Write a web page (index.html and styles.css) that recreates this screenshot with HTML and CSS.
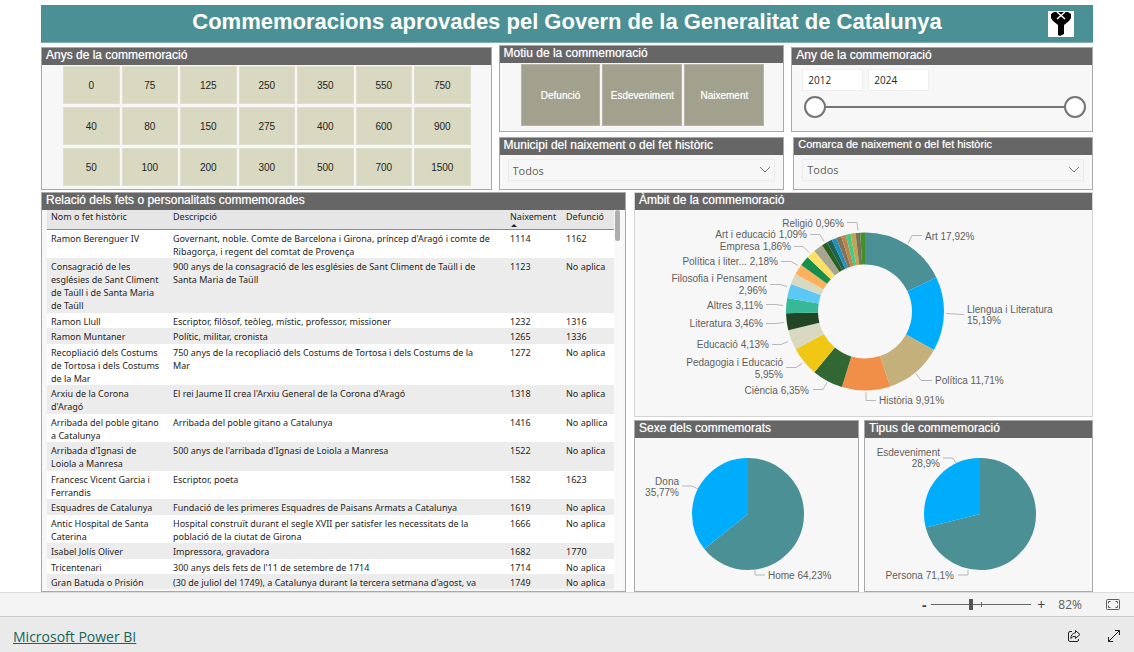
FILE: index.html
```html
<!DOCTYPE html>
<html lang="ca">
<head>
<meta charset="utf-8">
<meta name="viewport" content="width=device-width, initial-scale=1">
<title>Commemoracions aprovades pel Govern de la Generalitat de Catalunya</title>
<link rel="stylesheet" href="styles.css">
</head>
<body>
<main class="report">
  <header class="banner">
    <h1 class="banner-title">Commemoracions aprovades pel Govern de la Generalitat de Catalunya</h1>
    <button class="clear-filter" type="button" aria-label="Esborra els filtres">
      <svg viewBox="0 0 26 26" width="26" height="26" aria-hidden="true">
        <path d="M3 3L6 1H20L23 3V7L21 10L16 14V23L12 25L10 24V14L5 10L3 7Z" fill="#000"/>
        <path d="M9 1L17 8M17 1L9 8" stroke="#fff" stroke-width="1.500" fill="none"/>
      </svg>
    </button>
  </header>

  <div class="filters">
    <section class="panel years">
      <h2 class="panel-title">Anys de la commemoració</h2>
      <div class="year-tiles">
        <button class="tile" type="button">0</button><button class="tile" type="button">75</button><button class="tile" type="button">125</button><button class="tile" type="button">250</button><button class="tile" type="button">350</button><button class="tile" type="button">550</button><button class="tile" type="button">750</button>
        <button class="tile" type="button">40</button><button class="tile" type="button">80</button><button class="tile" type="button">150</button><button class="tile" type="button">275</button><button class="tile" type="button">400</button><button class="tile" type="button">600</button><button class="tile" type="button">900</button>
        <button class="tile" type="button">50</button><button class="tile" type="button">100</button><button class="tile" type="button">200</button><button class="tile" type="button">300</button><button class="tile" type="button">500</button><button class="tile" type="button">700</button><button class="tile" type="button">1500</button>
      </div>
    </section>

    <div class="filter-stack">
      <section class="panel">
        <h2 class="panel-title">Motiu de la commemoració</h2>
        <div class="reason-tiles">
          <button class="tile tile-dark" type="button">Defunció</button>
          <button class="tile tile-dark" type="button">Esdeveniment</button>
          <button class="tile tile-dark" type="button">Naixement</button>
        </div>
      </section>
      <section class="panel">
        <h2 class="panel-title"><label for="municipi">Municipi del naixement o del fet històric</label></h2>
        <div class="dropdown">
          <select class="dropdown-select" id="municipi"><option>Todos</option></select>
          <svg class="dropdown-arrow" viewBox="0 0 12 8" width="12" height="8" aria-hidden="true"><path d="M1 1L6 6L11 1"/></svg>
        </div>
      </section>
    </div>

    <div class="filter-stack filter-stack-right">
      <section class="panel">
        <h2 class="panel-title">Any de la commemoració</h2>
        <div class="range">
          <div class="range-values">
            <input class="range-box" type="text" value="2012" aria-label="Any inicial">
            <input class="range-box" type="text" value="2024" aria-label="Any final">
          </div>
          <div class="range-track">
            <input class="range-input" type="range" min="2012" max="2024" value="2012" aria-label="Des de l'any">
            <input class="range-input" type="range" min="2012" max="2024" value="2024" aria-label="Fins a l'any">
          </div>
        </div>
      </section>
      <section class="panel comarca">
        <h2 class="panel-title panel-title-small"><label for="comarca">Comarca de naixement o del fet històric</label></h2>
        <div class="dropdown">
          <select class="dropdown-select" id="comarca"><option>Todos</option></select>
          <svg class="dropdown-arrow" viewBox="0 0 12 8" width="12" height="8" aria-hidden="true"><path d="M1 1L6 6L11 1"/></svg>
        </div>
      </section>
    </div>
  </div>

  <div class="details">
    <section class="panel list">
      <h2 class="panel-title">Relació dels fets o personalitats commemorades</h2>
      <div class="list-body">
        <div class="list-view">
          <table class="events">
            <colgroup><col class="col-name"><col class="col-text"><col class="col-birth"><col class="col-death"></colgroup>
            <thead>
              <tr><th scope="col">Nom o fet històric</th><th scope="col">Descripció</th><th scope="col" class="sorted" aria-sort="ascending">Naixement</th><th scope="col">Defunció</th></tr>
            </thead>
            <tbody>
              <tr><td>Ramon Berenguer IV</td><td>Governant, noble. Comte de Barcelona i Girona, príncep d'Aragó i comte de Ribagorça, i regent del comtat de Provença</td><td>1114</td><td>1162</td></tr>
              <tr><td>Consagració de les esglésies de Sant Climent de Taüll i de Santa Maria de Taüll</td><td>900 anys de la consagració de les esglésies de Sant Climent de Taüll i de Santa Maria de Taüll</td><td>1123</td><td>No aplica</td></tr>
              <tr><td>Ramon Llull</td><td>Escriptor, filòsof, teòleg, místic, professor, missioner</td><td>1232</td><td>1316</td></tr>
              <tr><td>Ramon Muntaner</td><td>Polític, militar, cronista</td><td>1265</td><td>1336</td></tr>
              <tr><td>Recopliació dels Costums de Tortosa i dels Costums de la Mar</td><td>750 anys de la recopliació dels Costums de Tortosa i dels Costums de la Mar</td><td>1272</td><td>No aplica</td></tr>
              <tr><td>Arxiu de la Corona d'Aragó</td><td>El rei Jaume II crea l'Arxiu General de la Corona d'Aragó</td><td>1318</td><td>No aplica</td></tr>
              <tr><td>Arribada del poble gitano a Catalunya</td><td>Arribada del poble gitano a Catalunya</td><td>1416</td><td>No apllica</td></tr>
              <tr><td>Arribada d'Ignasi de Loiola a Manresa</td><td>500 anys de l'arribada d'Ignasi de Loiola a Manresa</td><td>1522</td><td>No aplica</td></tr>
              <tr><td>Francesc Vicent Garcia i Ferrandis</td><td>Escriptor, poeta</td><td>1582</td><td>1623</td></tr>
              <tr><td>Esquadres de Catalunya</td><td>Fundació de les primeres Esquadres de Paisans Armats a Catalunya</td><td>1619</td><td>No aplica</td></tr>
              <tr><td>Antic Hospital de Santa Caterina</td><td>Hospital construït durant el segle XVII per satisfer les necessitats de la població de la ciutat de Girona</td><td>1666</td><td>No aplica</td></tr>
              <tr><td>Isabel Jolís Oliver</td><td>Impressora, gravadora</td><td>1682</td><td>1770</td></tr>
              <tr><td>Tricentenari</td><td>300 anys dels fets de l'11 de setembre de 1714</td><td>1714</td><td>No aplica</td></tr>
              <tr><td>Gran Batuda o Prisión</td><td>(30 de juliol del 1749), a Catalunya durant la tercera setmana d'agost, va</td><td>1749</td><td>No aplica</td></tr>
            </tbody>
          </table>
        </div>
        <div class="scrollbar"><div class="scrollbar-thumb"></div></div>
      </div>
    </section>

    <div class="charts">
      <section class="panel chart-wide">
        <h2 class="panel-title">Àmbit de la commemoració</h2>
        <div class="chart">
          <svg class="chart-svg" viewBox="-230 -101 457 205" role="img" aria-label="Àmbit de la commemoració">
            <g class="ring" transform="rotate(-90)">
              <circle r="63" pathLength="100" stroke="#4a9094" stroke-dasharray="17.92 82.08"/>
              <circle r="63" pathLength="100" stroke="#00acfc" stroke-dasharray="15.19 84.81" stroke-dashoffset="-17.92"/>
              <circle r="63" pathLength="100" stroke="#c4b07b" stroke-dasharray="11.71 88.29" stroke-dashoffset="-33.11"/>
              <circle r="63" pathLength="100" stroke="#f18f49" stroke-dasharray="9.91 90.09" stroke-dashoffset="-44.82"/>
              <circle r="63" pathLength="100" stroke="#326633" stroke-dasharray="6.35 93.65" stroke-dashoffset="-54.73"/>
              <circle r="63" pathLength="100" stroke="#f1c716" stroke-dasharray="5.95 94.05" stroke-dashoffset="-61.08"/>
              <circle r="63" pathLength="100" stroke="#d9d8c0" stroke-dasharray="4.13 95.87" stroke-dashoffset="-67.03"/>
              <circle r="63" pathLength="100" stroke="#224624" stroke-dasharray="3.46 96.54" stroke-dashoffset="-71.16"/>
              <circle r="63" pathLength="100" stroke="#37b897" stroke-dasharray="3.11 96.89" stroke-dashoffset="-74.62"/>
              <circle r="63" pathLength="100" stroke="#5bc8f5" stroke-dasharray="2.96 97.04" stroke-dashoffset="-77.73"/>
              <circle r="63" pathLength="100" stroke="#d9d8c0" stroke-dasharray="2.18 97.82" stroke-dashoffset="-80.69"/>
              <circle r="63" pathLength="100" stroke="#ffb05c" stroke-dasharray="2.18 97.82" stroke-dashoffset="-82.87"/>
              <circle r="63" pathLength="100" stroke="#168f4b" stroke-dasharray="2 98" stroke-dashoffset="-85.05"/>
              <circle r="63" pathLength="100" stroke="#ffe066" stroke-dasharray="1.86 98.14" stroke-dashoffset="-87.05"/>
              <circle r="63" pathLength="100" stroke="#a5a68f" stroke-dasharray="1.95 98.05" stroke-dashoffset="-88.91"/>
              <circle r="63" pathLength="100" stroke="#2b611f" stroke-dasharray="1.14 98.86" stroke-dashoffset="-90.86"/>
              <circle r="63" pathLength="100" stroke="#1c6353" stroke-dasharray="1.09 98.91" stroke-dashoffset="-92"/>
              <circle r="63" pathLength="100" stroke="#2390c0" stroke-dasharray="1 99" stroke-dashoffset="-93.09"/>
              <circle r="63" pathLength="100" stroke="#857452" stroke-dasharray="1 99" stroke-dashoffset="-94.09"/>
              <circle r="63" pathLength="100" stroke="#c2844d" stroke-dasharray="0.96 99.04" stroke-dashoffset="-95.09"/>
              <circle r="63" pathLength="100" stroke="#49c985" stroke-dasharray="1 99" stroke-dashoffset="-96.05"/>
              <circle r="63" pathLength="100" stroke="#c3a451" stroke-dasharray="1 99" stroke-dashoffset="-97.05"/>
              <circle r="63" pathLength="100" stroke="#77715b" stroke-dasharray="0.96 99.04" stroke-dashoffset="-98.05"/>
              <circle r="63" pathLength="100" stroke="#41902a" stroke-dasharray="0.99 99.01" stroke-dashoffset="-99.01"/>
            </g>
            <g class="leaders">
              <polyline points="-18,-89 -8,-89 -7,-81"/>
              <polyline points="-55,-77 -45,-77 -41,-70"/>
              <polyline points="-71,-65 -62,-65 -56,-59"/>
              <polyline points="-84,-50 -74,-50 -67,-46"/>
              <polyline points="-95,-27 -85,-27 -78,-25"/>
              <polyline points="-99,-7 -89,-7 -82,-6"/>
              <polyline points="-99,12 -89,12 -81,11"/>
              <polyline points="-93,33 -84,33 -77,30"/>
              <polyline points="-79,56 -69,56 -63,52"/>
              <polyline points="-52,78 -42,78 -38,71"/>
              <polyline points="1,81 1,89 11,89"/>
              <polyline points="51,62 56,69 67,69"/>
              <polyline points="81,2 99,3"/>
              <polyline points="43,-68 47,-76 57,-76"/>
            </g>
            <g class="labels labels-left">
              <text x="-21" y="-85">Religió 0,96%</text>
              <text x="-58" y="-74">Art i educació 1,09%</text>
              <text x="-74" y="-62">Empresa 1,86%</text>
              <text x="-87" y="-47">Política i liter... 2,18%</text>
              <text x="-98" y="-30">Filosofia i Pensament</text>
              <text x="-98" y="-18">2,96%</text>
              <text x="-102" y="-3">Altres 3,11%</text>
              <text x="-102" y="15">Literatura 3,46%</text>
              <text x="-96" y="36">Educació 4,13%</text>
              <text x="-82" y="54">Pedagogia i Educació</text>
              <text x="-82" y="66">5,95%</text>
              <text x="-56" y="82">Ciència 6,35%</text>
            </g>
            <g class="labels">
              <text x="60" y="-72">Art 17,92%</text>
              <text x="102" y="1">Llengua i Literatura</text>
              <text x="102" y="12">15,19%</text>
              <text x="70" y="72">Política 11,71%</text>
              <text x="14" y="92">Història 9,91%</text>
            </g>
          </svg>
        </div>
      </section>

      <section class="panel">
        <h2 class="panel-title">Sexe dels commemorats</h2>
        <div class="chart">
          <svg class="chart-svg" viewBox="-113 -75 223 151" role="img" aria-label="Sexe dels commemorats">
            <g class="pie" transform="rotate(-90)">
              <circle r="28" pathLength="100" stroke="#4a9094" stroke-dasharray="64.23 35.77"/>
              <circle r="28" pathLength="100" stroke="#00acfc" stroke-dasharray="35.77 64.23" stroke-dashoffset="-64.23"/>
            </g>
            <g class="leaders">
              <polyline points="-66,-28 -56,-28 -50,-25"/>
              <polyline points="7,56 7,61 17,61"/>
            </g>
            <g class="labels labels-left">
              <text x="-69" y="-29">Dona</text>
              <text x="-69" y="-18">35,77%</text>
            </g>
            <g class="labels"><text x="20" y="65">Home 64,23%</text></g>
          </svg>
        </div>
      </section>

      <section class="panel">
        <h2 class="panel-title">Tipus de commemoració</h2>
        <div class="chart">
          <svg class="chart-svg" viewBox="-115 -75 227 151" role="img" aria-label="Tipus de commemoració">
            <g class="pie" transform="rotate(-90)">
              <circle r="28" pathLength="100" stroke="#4a9094" stroke-dasharray="71.1 28.9"/>
              <circle r="28" pathLength="100" stroke="#00acfc" stroke-dasharray="28.9 71.1" stroke-dashoffset="-71.1"/>
            </g>
            <g class="leaders">
              <polyline points="-37,-56 -27,-56 -24,-51"/>
              <polyline points="-22,61 -12,61 -12,56"/>
            </g>
            <g class="labels labels-left">
              <text x="-40" y="-58">Esdeveniment</text>
              <text x="-40" y="-47">28,9%</text>
              <text x="-26" y="65">Persona 71,1%</text>
            </g>
          </svg>
        </div>
      </section>
    </div>
  </div>
</main>

<div class="zoombar">
  <button class="zoom-step" type="button" aria-label="Redueix">-</button>
  <input class="zoom-range" type="range" min="0" max="100" value="39" aria-label="Zoom">
  <button class="zoom-step" type="button" aria-label="Amplia">+</button>
  <span class="zoom-value">82%</span>
  <button class="icon-button" type="button" aria-label="Ajusta a la pàgina">
    <svg viewBox="0 0 14 11" width="14" height="11" aria-hidden="true">
      <rect x="0.5" y="0.5" width="13" height="10" rx="1"/>
      <path d="M2.5 4.5V2.5H4.5M9.5 2.5H11.5V4.5M11.5 6.5V8.5H9.5M4.5 8.5H2.5V6.5"/>
    </svg>
  </button>
</div>

<footer class="statusbar">
  <a class="brand" href="#">Microsoft Power BI</a>
  <div class="actions">
    <button class="icon-button icon-dark" type="button" aria-label="Comparteix">
      <svg viewBox="0 0 14 14" width="14" height="14" aria-hidden="true">
        <path d="M5 2.5H3Q1.500 2.500 1.500 4V11Q1.500 12.500 3 12.500H10Q11.500 12.500 11.500 11V10"/>
        <path d="M8.500 1.500L13 5.500L8.500 9.500V7.300Q5.500 7 3.800 9.500Q4 4.500 8.500 3.800Z"/>
      </svg>
    </button>
    <button class="icon-button icon-dark" type="button" aria-label="Pantalla completa">
      <svg viewBox="0 0 14 14" width="14" height="14" aria-hidden="true">
        <path d="M1.500 12.500L12.500 1.500M8 1.500H12.500V6M1.500 8V12.500H6"/>
      </svg>
    </button>
  </div>
</footer>
</body>
</html>
```
FILE: styles.css
```css
* { box-sizing: border-box; }

body {
  margin: 0;
  height: 100vh;
  display: flex;
  flex-direction: column;
  background: #fff;
  color: #252423;
  font-family: "Liberation Sans", Arial, sans-serif;
  font-size: 10px;
}

button, input, select { font: inherit; color: inherit; margin: 0; }
button { border: 0; padding: 0; background: none; cursor: pointer; }

.report {
  flex: 1;
  min-height: 0;
  display: flex;
  flex-direction: column;
  padding: 5px 41px 0;
}

.banner {
  display: grid;
  grid-template-columns: 1fr auto 1fr;
  align-items: center;
  padding: 6px 19px 5px;
  background: #4a9094;
  border-bottom: 1px solid #7fb0b3;
}
.banner-title {
  grid-column: 2;
  margin: 0;
  color: #fff;
  font-size: 22px;
  line-height: 22px;
  padding-bottom: 4px;
}
.clear-filter {
  justify-self: end;
  display: flex;
  background: #fff;
}

.panel {
  display: flex;
  flex-direction: column;
  min-width: 0;
  min-height: 0;
  background: #f7f7f7;
  border: 1px solid #a9a9a9;
}
.panel-title {
  margin: 0;
  padding: 0 4px;
  height: 17px;
  flex: none;
  background: #666;
  color: #fff;
  font-size: 12px;
  font-weight: 400;
  line-height: 15px;
  text-shadow: 0 0 1px rgba(255, 255, 255, 0.6);
}
.panel-title-small { font-size: 11px; line-height: 13px; }

.filters {
  display: grid;
  grid-template-columns: 451fr 286fr 302fr;
  column-gap: 7px;
  padding-top: 2px;
}
.years { margin-top: 2px; }
.filter-stack {
  display: grid;
  grid-template-rows: auto auto;
  gap: 5px;
}
.filter-stack-right { padding-top: 2px; }
.comarca { margin-left: 2px; }

.year-tiles {
  display: grid;
  grid-template-columns: repeat(7, 1fr);
  gap: 3px 2px;
  padding: 1px 20px 3px 21px;
}
.reason-tiles {
  display: grid;
  grid-template-columns: repeat(3, 1fr);
  gap: 2px;
  padding: 1px 19px 5px 21px;
}
.tile {
  height: 38px;
  background: #d9d8c0;
  border: 1px solid #dfdfcf;
}
.tile-dark {
  height: 62px;
  background: #a2a18e;
  border-color: #b5b4a6;
  color: #fff;
  text-shadow: 0 0 1px rgba(255, 255, 255, 0.6);
}

.dropdown {
  display: grid;
  align-items: center;
  margin: 4px 8px 8px;
  border: 1px solid #ececec;
  font-family: "Open Sans", "Noto Sans", sans-serif;
  font-size: 11px;
}
.dropdown-select {
  grid-area: 1 / 1;
  width: 100%;
  height: 20px;
  padding: 0 4px;
  border: 0;
  background: transparent;
  color: #605e5c;
  appearance: none;
}
.dropdown-arrow {
  grid-area: 1 / 1;
  justify-self: end;
  margin-right: 3px;
  pointer-events: none;
  fill: none;
  stroke: #777;
}

.range { padding: 4px 6px 12px 10px; }
.range-values { display: flex; gap: 5px; }
.range-box {
  width: 61px;
  height: 22px;
  padding: 0 5px;
  border: 1px solid #eee;
  background: #fff;
  font-family: "Open Sans", "Noto Sans", sans-serif;
}
.range-track {
  display: grid;
  align-items: center;
  height: 22px;
  margin: 5px 0 0 2px;
  background: linear-gradient(#757575, #757575) center / calc(100% - 22px) 2px no-repeat;
}
.range-input {
  grid-area: 1 / 1;
  width: 100%;
  height: 22px;
  appearance: none;
  background: none;
  pointer-events: none;
}
.range-input::-webkit-slider-thumb {
  appearance: none;
  width: 22px;
  height: 22px;
  border: 2px solid #757575;
  border-radius: 50%;
  background: #fff;
  pointer-events: auto;
}

.details {
  flex: 1;
  min-height: 0;
  display: grid;
  grid-template-columns: 585fr 459fr;
  grid-template-rows: minmax(0, 1fr);
  column-gap: 8px;
  padding-top: 2px;
}
.list-body {
  flex: 1;
  min-height: 0;
  display: flex;
  padding: 0 3px 2px 5px;
}
.list-view { flex: 1; min-width: 0; overflow: hidden; }
.events {
  width: 100%;
  table-layout: fixed;
  border-collapse: collapse;
  font-family: "Noto Sans", "Open Sans", sans-serif;
  font-size: 9px;
  line-height: 13px;
}
.col-name { width: 122px; }
.col-birth { width: 56px; }
.col-death { width: 52px; }
.events th, .events td {
  padding: 2px 0 0 4px;
  text-align: left;
  vertical-align: top;
  font-weight: 400;
}
.events th {
  padding-top: 0;
  padding-bottom: 7px;
  background: #e6e6e6;
  box-shadow: inset 0 -1px #8a8a8a;
}
.sorted { position: relative; }
.sorted::after {
  content: "";
  position: absolute;
  left: 5px;
  bottom: 3px;
  border: 3px solid transparent;
  border-top: 0;
  border-bottom-color: #252423;
}
.events td { background: #fff; }
.events td:nth-child(1) { padding-right: 7px; }
.events td:nth-child(2) { padding-right: 15px; }
.events tbody tr:nth-child(even) td { background: #ececec; padding-bottom: 1px; }
.scrollbar { width: 8px; flex: none; background: #f9f9f9; padding: 0 2px 0 1px; }
.scrollbar-thumb { height: 31px; border-radius: 3px; background: #adadad; }

.charts {
  display: grid;
  grid-template-columns: 225fr 229fr;
  grid-template-rows: minmax(0, 225fr) minmax(0, 172fr);
  gap: 3px 5px;
}
.chart-wide { grid-column: 1 / -1; border-color: #d4d4d4; }
.chart { flex: 1; min-height: 0; display: flex; }
.chart-svg { width: 100%; height: 100%; }
.ring { fill: none; stroke-width: 32px; }
.pie { fill: none; stroke-width: 56px; }
.leaders { fill: none; stroke: #b8b8b8; }
.labels { fill: #605e5c; font-size: 10px; }
.labels-left { text-anchor: end; }

.zoombar {
  flex: none;
  display: flex;
  align-items: center;
  justify-content: flex-end;
  height: 24px;
  padding-right: 14px;
  border-top: 1px solid #dcdcdc;
  background: #f4f4f4;
  color: #605e5c;
  font-family: "Open Sans", "Noto Sans", sans-serif;
}
.zoom-step {
  width: 20px;
  font-size: 14px;
  line-height: 20px;
  color: #444;
}
.zoom-step:first-child { width: 14px; font-weight: 700; }
.zoom-range {
  width: 100px;
  height: 12px;
  appearance: none;
  background:
    linear-gradient(#666, #666) center / 100% 1px no-repeat,
    linear-gradient(#666, #666) 50px center / 1px 5px no-repeat;
}
.zoom-range::-webkit-slider-thumb {
  appearance: none;
  width: 4px;
  height: 11px;
  background: #555;
}
.zoom-value { margin: 0 24px 0 7px; font-size: 12px; }
.icon-button { display: flex; }
.icon-button svg { fill: none; stroke: #605e5c; }
.icon-dark svg { stroke: #222; }

.statusbar {
  flex: none;
  display: flex;
  align-items: center;
  justify-content: space-between;
  height: 36px;
  padding: 3px 13px 0;
  border-top: 1px solid #c8c8c8;
  background: #eaeaea;
}
.brand {
  color: #12665c;
  font-family: "Open Sans", "Noto Sans", sans-serif;
  font-size: 14px;
}
.actions { display: flex; gap: 26px; }
```
